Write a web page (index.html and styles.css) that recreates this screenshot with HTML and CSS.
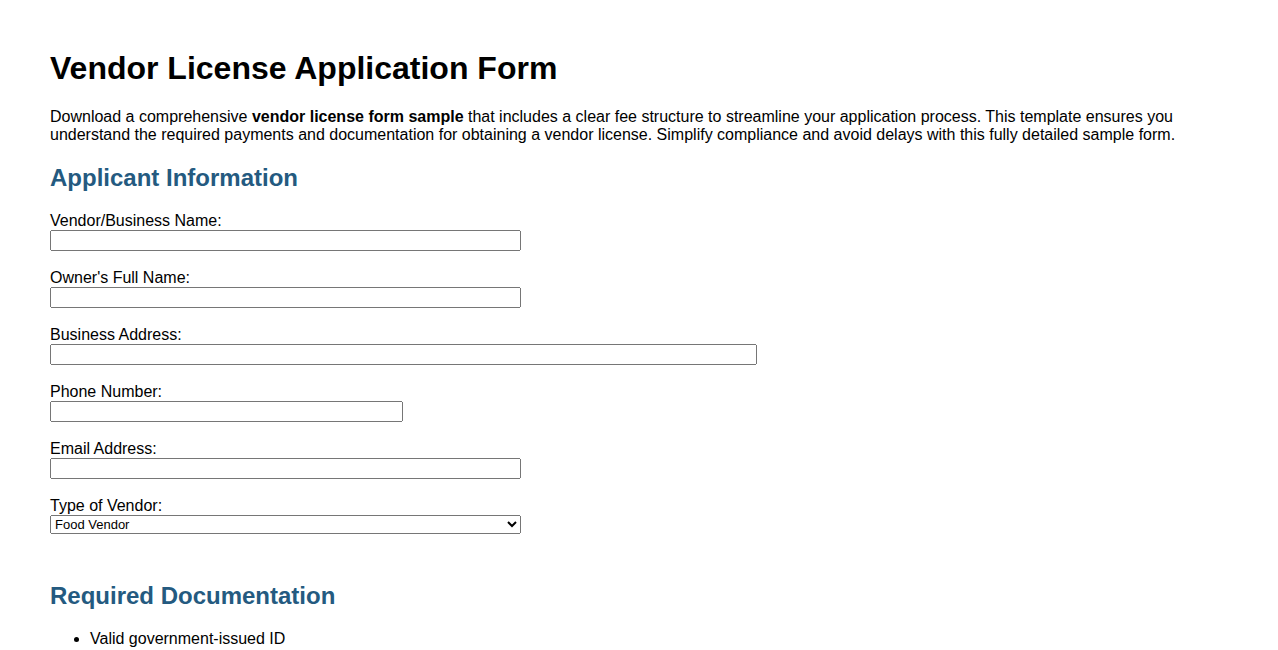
FILE: index.html
```html
<!DOCTYPE html>
<html lang="en">
<head>
<meta charset="utf-8">
<title>Vendor License Application Form</title>
<link rel="stylesheet" href="styles.css">
</head>
<body>
<div class="page">
  <h1>Vendor License Application Form</h1>
  <p class="intro">Download a comprehensive <strong>vendor license form sample</strong> that includes a clear fee structure to streamline your application process. This template ensures you understand the required payments and documentation for obtaining a vendor license. Simplify compliance and avoid delays with this fully detailed sample form.</p>

  <section class="section section-form">
    <h2>Applicant Information</h2>
    <div class="field">
      <label for="bname">Vendor/Business Name:</label>
      <input id="bname" class="w40" type="text">
    </div>
    <div class="field">
      <label for="oname">Owner's Full Name:</label>
      <input id="oname" class="w40" type="text">
    </div>
    <div class="field">
      <label for="addr">Business Address:</label>
      <input id="addr" class="w60" type="text">
    </div>
    <div class="field">
      <label for="phone">Phone Number:</label>
      <input id="phone" class="w30" type="tel">
    </div>
    <div class="field">
      <label for="email">Email Address:</label>
      <input id="email" class="w40" type="email">
    </div>
    <div class="field">
      <label for="type">Type of Vendor:</label>
      <select id="type" class="w40">
        <option>Food Vendor</option>
        <option>Retail Vendor</option>
        <option>Service Vendor</option>
      </select>
    </div>
  </section>

  <section class="section">
    <h2>Required Documentation</h2>
    <ul class="docs">
      <li>Valid government-issued ID</li>
      <li>Proof of business address</li>
      <li>Business registration certificate</li>
    </ul>
  </section>
</div>
</body>
</html>
```

FILE: styles.css
```css
html, body {
  margin: 0;
  padding: 0;
  background: #ffffff;
}

body {
  font-family: "Liberation Sans", Arial, sans-serif;
  font-size: 16px;
  color: #000000;
}

.page {
  padding: 29px 50px 40px;
}

h1 {
  font-size: 32px;
  font-weight: bold;
  margin: 21px 0;
}

.intro {
  margin: 16px 0;
}

h2 {
  font-size: 24px;
  font-weight: bold;
  color: #245a80;
  margin: 20px 0;
}

.section-form {
  margin-bottom: 48px;
}

.field {
  margin-bottom: 18px;
}

.field label {
  display: block;
}

.field input,
.field select {
  display: block;
  box-sizing: border-box;
  margin: 0;
}

.field input {
  height: 21px;
}

.field select {
  height: 19px;
  font-family: "Liberation Sans", Arial, sans-serif;
  font-size: 13px;
}

.w30 { width: 30%; }
.w40 { width: 40%; }
.w60 { width: 60%; }

.docs {
  margin: 16px 0;
  padding-left: 40px;
}
```
